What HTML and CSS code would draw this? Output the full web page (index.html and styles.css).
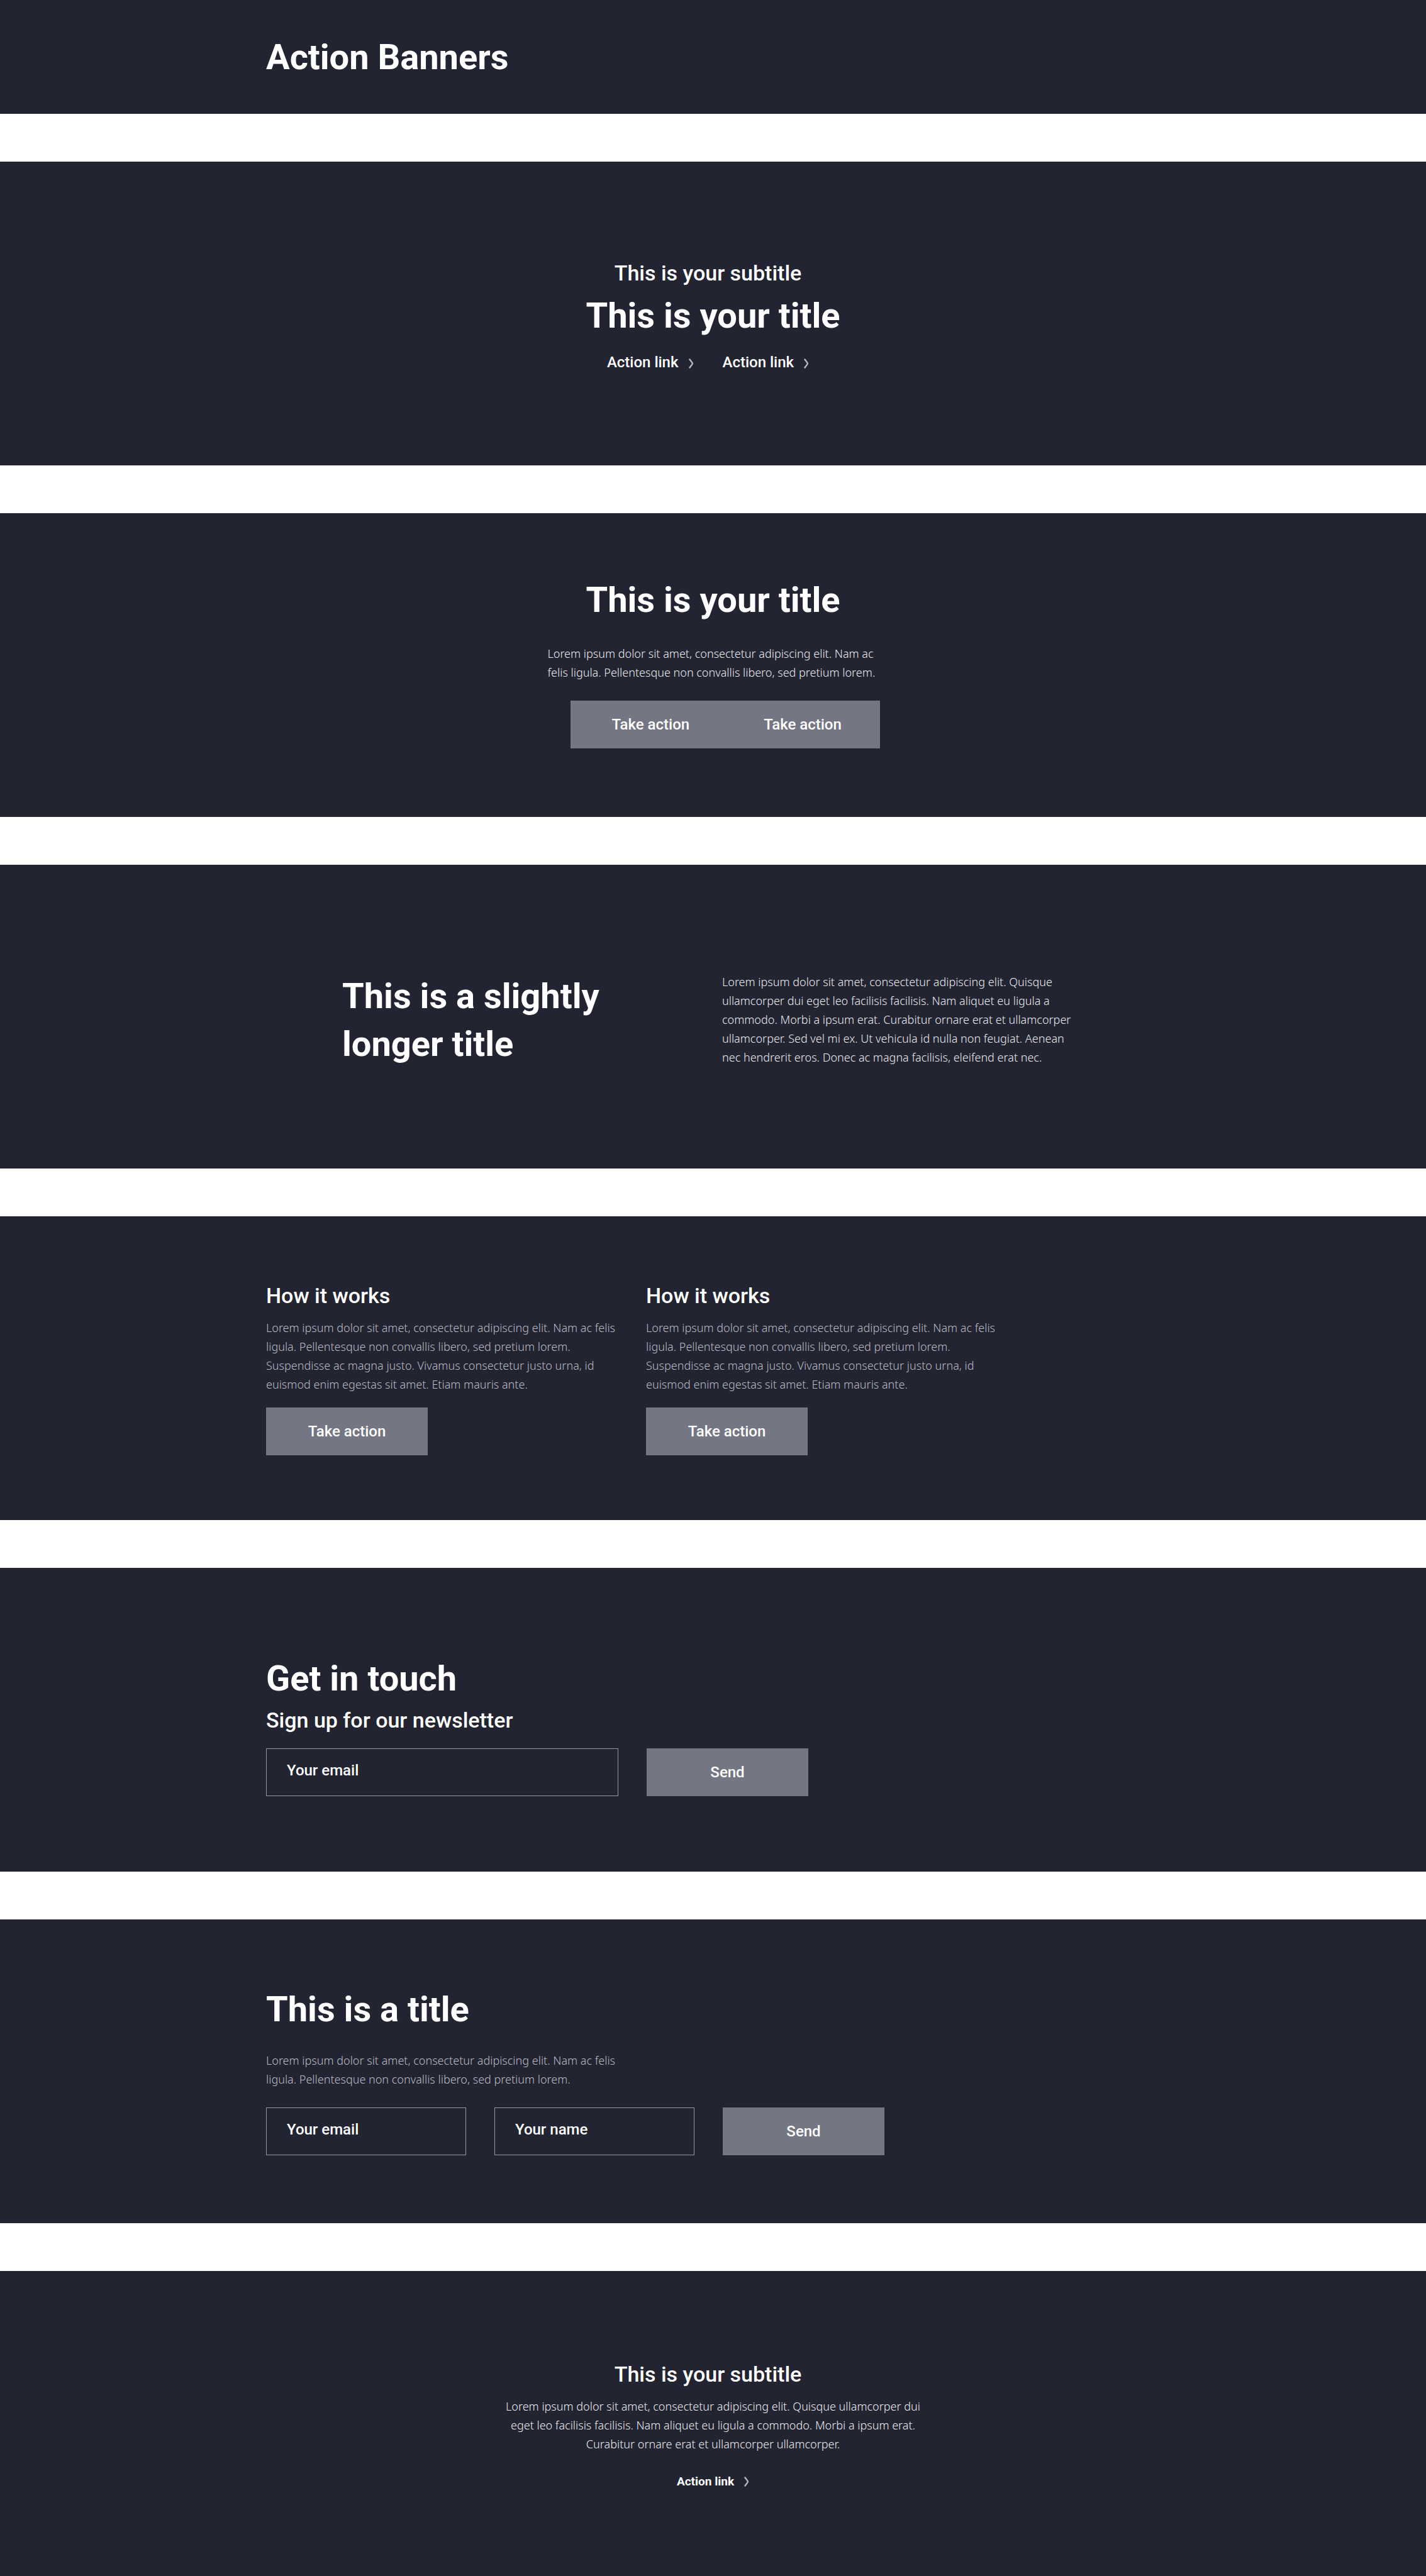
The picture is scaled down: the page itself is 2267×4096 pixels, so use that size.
FILE: index.html
```html
<!DOCTYPE html>
<html lang="en">
<head>
  <meta charset="utf-8">
  <meta name="viewport" content="width=device-width, initial-scale=1">
  <title>Action Banners</title>
  <link rel="stylesheet" href="styles.css">
</head>
<body>
  <header class="page-header">
    <div class="wrap">
      <h1 class="title">Action Banners</h1>
    </div>
  </header>

  <main class="banners">
    <section class="banner banner-links">
      <div class="wrap centered">
        <p class="subtitle">This is your subtitle</p>
        <h2 class="title">This is your title</h2>
        <div class="links">
          <a class="link" href="#">Action link
            <svg class="chevron" viewBox="0 0 8 20" aria-hidden="true"><path d="M1.5 5.5 L5.3 10.6 Q6.3 12 5.3 13.4 L1.5 18.5"/></svg>
          </a>
          <a class="link" href="#">Action link
            <svg class="chevron" viewBox="0 0 8 20" aria-hidden="true"><path d="M1.5 5.5 L5.3 10.6 Q6.3 12 5.3 13.4 L1.5 18.5"/></svg>
          </a>
        </div>
      </div>
    </section>

    <section class="banner banner-actions">
      <div class="wrap centered">
        <h2 class="title">This is your title</h2>
        <div class="narrow">
          <p class="text">Lorem ipsum dolor sit amet, consectetur adipiscing elit. Nam ac felis ligula. Pellentesque non convallis libero, sed pretium lorem.</p>
          <div class="button-group">
            <button class="button" type="button">Take action</button>
            <button class="button" type="button">Take action</button>
          </div>
        </div>
      </div>
    </section>

    <section class="banner banner-split">
      <div class="wrap columns indent">
        <h2 class="title">This is a slightly<br>longer title</h2>
        <p class="text">Lorem ipsum dolor sit amet, consectetur adipiscing elit. Quisque ullamcorper dui eget leo facilisis facilisis. Nam aliquet eu ligula a commodo. Morbi a ipsum erat. Curabitur ornare erat et ullamcorper ullamcorper. Sed vel mi ex. Ut vehicula id nulla non feugiat. Aenean nec hendrerit eros. Donec ac magna facilisis, eleifend erat nec.</p>
      </div>
    </section>

    <section class="banner banner-how">
      <div class="wrap columns">
        <article>
          <h3 class="subtitle">How it works</h3>
          <p class="text muted">Lorem ipsum dolor sit amet, consectetur adipiscing elit. Nam ac felis ligula. Pellentesque non convallis libero, sed pretium lorem. Suspendisse ac magna justo. Vivamus consectetur justo urna, id euismod enim egestas sit amet. Etiam mauris ante.</p>
          <button class="button" type="button">Take action</button>
        </article>
        <article>
          <h3 class="subtitle">How it works</h3>
          <p class="text muted">Lorem ipsum dolor sit amet, consectetur adipiscing elit. Nam ac felis ligula. Pellentesque non convallis libero, sed pretium lorem. Suspendisse ac magna justo. Vivamus consectetur justo urna, id euismod enim egestas sit amet. Etiam mauris ante.</p>
          <button class="button" type="button">Take action</button>
        </article>
      </div>
    </section>

    <section class="banner banner-newsletter">
      <div class="wrap">
        <h2 class="title">Get in touch</h2>
        <p class="subtitle">Sign up for our newsletter</p>
        <form class="form">
          <input class="field field-wide" type="email" placeholder="Your email" aria-label="Your email">
          <button class="button" type="button">Send</button>
        </form>
      </div>
    </section>

    <section class="banner banner-signup">
      <div class="wrap">
        <h2 class="title">This is a title</h2>
        <p class="text muted column">Lorem ipsum dolor sit amet, consectetur adipiscing elit. Nam ac felis ligula. Pellentesque non convallis libero, sed pretium lorem.</p>
        <form class="form">
          <input class="field" type="email" placeholder="Your email" aria-label="Your email">
          <input class="field" type="text" placeholder="Your name" aria-label="Your name">
          <button class="button" type="button">Send</button>
        </form>
      </div>
    </section>

    <section class="banner banner-closing">
      <div class="wrap centered">
        <h3 class="subtitle">This is your subtitle</h3>
        <p class="text">Lorem ipsum dolor sit amet, consectetur adipiscing elit. Quisque ullamcorper dui eget leo facilisis facilisis. Nam aliquet eu ligula a commodo. Morbi a ipsum erat. Curabitur ornare erat et ullamcorper ullamcorper.</p>
        <a class="link link-small" href="#">Action link
          <svg class="chevron" viewBox="0 2 8 20" aria-hidden="true"><path d="M1.5 5.5 L5.3 10.6 Q6.3 12 5.3 13.4 L1.5 18.5"/></svg>
        </a>
      </div>
    </section>
  </main>
</body>
</html>
```
FILE: styles.css
```css
:root {
  --ink: #222431;
  --slate: #747683;
  --line: #9597a3;
  --muted: #b9bbc6;
  --soft: #eaebef;
}

*,
*::before,
*::after {
  box-sizing: border-box;
}

body {
  margin: 0;
  min-height: 100vh;
  display: flex;
  flex-direction: column;
  gap: 76px;
  background: #fff;
  color: #fff;
  font-family: Roboto, "Noto Sans", sans-serif;
}

.wrap {
  width: min(100% - 48px, 1421px);
  margin: 0 auto;
}

/* Type */

h1,
h2,
h3,
p {
  margin: 0;
}

.title {
  font-size: 56px;
  font-weight: 700;
  line-height: 76px;
}

.subtitle {
  font-size: 34px;
  font-weight: 500;
  line-height: 40px;
}

.text {
  font-family: "Noto Sans", "Open Sans", sans-serif;
  font-size: 18px;
  font-weight: 300;
  line-height: 30px;
  color: var(--soft);
}

.muted {
  color: var(--muted);
}

/* Controls */

.button {
  min-width: 257px;
  height: 76px;
  padding: 0 32px;
  border: 0;
  background: var(--slate);
  color: #fff;
  font: 500 24px/40px Roboto, "Noto Sans", sans-serif;
}

.field {
  width: 318px;
  height: 76px;
  padding: 0 32px 6px;
  border: 1px solid var(--line);
  border-radius: 0;
  background: transparent;
  color: #fff;
  font: 500 24px/40px Roboto, "Noto Sans", sans-serif;
}

.field::placeholder {
  color: #fff;
  opacity: 1;
}

.field-wide {
  width: 560px;
}

.form {
  display: flex;
  flex-wrap: wrap;
  gap: 45px;
}

.link {
  display: flex;
  align-items: center;
  gap: 16px;
  padding-right: 16px;
  color: #fff;
  font-size: 24px;
  font-weight: 500;
  line-height: 40px;
  text-decoration: none;
}

.link-small {
  padding-right: 0;
  font-size: 19px;
  font-weight: 700;
  line-height: 30px;
}

.chevron {
  width: 8px;
  height: 20px;
  fill: none;
  stroke: #b5b8c6;
  stroke-width: 2.4;
  stroke-linecap: round;
}

/* Layout */

.page-header {
  min-height: 181px;
  padding-top: 53px;
  background: var(--ink);
}

.banners {
  flex: 1;
  display: flex;
  flex-direction: column;
  gap: 76px;
}

.banner {
  min-height: 483px;
  padding-bottom: 48px;
  background: var(--ink);
}

.centered {
  display: flex;
  flex-direction: column;
  align-items: center;
}

.centered > .subtitle {
  padding-right: 16px;
}

.columns {
  display: grid;
  grid-template-columns: repeat(2, minmax(0, 564px));
  gap: 40px;
}

.indent {
  padding-left: 121px;
}

.column {
  max-width: 564px;
}

.banner-links {
  padding-top: 157px;
}

.banner-links .title {
  margin: 10px 0 16px;
}

.links {
  display: flex;
  gap: 30px;
}

.banner-actions {
  padding-top: 100px;
}

.narrow {
  max-width: 526px;
  margin-top: 32px;
}

.button-group {
  display: flex;
  margin: 30px 0 0 36px;
}

.button-group .button {
  min-width: 0;
  flex: none;
  padding: 0 52px 0 66px;
}

.button-group .button:last-child {
  padding-right: 61px;
}

.banner-split {
  padding-top: 171px;
}

.banner-how {
  padding-top: 106px;
}

.banner-how .text {
  margin: 16px 0 22px;
}

.banner-newsletter {
  padding-top: 138px;
}

.banner-newsletter .subtitle {
  margin: 8px 0 25px;
}

.banner-signup {
  padding-top: 105px;
}

.banner-signup .text {
  margin: 28px 0 30px;
}

.banner-closing {
  flex: 1;
  padding-top: 144px;
}

.banner-closing .text {
  max-width: 664px;
  margin: 16px 0 30px;
  text-align: center;
}
```
